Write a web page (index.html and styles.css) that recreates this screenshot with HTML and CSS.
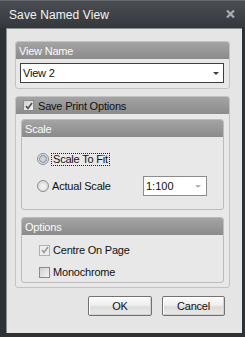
FILE: index.html
```html
<!DOCTYPE html>
<html>
<head>
<meta charset="utf-8">
<link rel="stylesheet" href="styles.css">
</head>
<body>
<div class="window">
  <div class="titlebar">
    <span class="title">Save Named View</span>
    <svg class="close" width="9" height="8" viewBox="0 0 9 8"><path d="M1 0.5 L8 7.5 M8 0.5 L1 7.5" stroke="#a7aeb6" stroke-width="2.2" fill="none"/></svg>
  </div>
  <div class="client">
    <section class="group g-view">
      <div class="group-h">View Name</div>
      <div class="group-b view-b">
        <div class="select">
          <span>View 2</span>
          <svg width="6" height="3" viewBox="0 0 6 3"><path d="M0 0 H6 L3 3 Z" fill="#3c3c3c"/></svg>
        </div>
      </div>
    </section>
    <section class="group g-print">
      <div class="group-h dark"><span class="cb checked"><svg width="8" height="8" viewBox="0 0 8 8"><path d="M1 4 L3 6.5 L7 1" stroke="#4a5058" stroke-width="1.6" fill="none"/></svg></span>Save Print Options</div>
      <div class="group-b print-b">
        <section class="group inner g-scale">
          <div class="group-h">Scale</div>
          <div class="group-b scale-b">
            <div class="row r1"><span class="radio active"></span><span class="focus">Scale To Fit</span></div>
            <div class="row r2"><span class="radio"></span><span class="lbl">Actual Scale</span>
              <div class="combo"><span>1:100</span><svg width="6" height="3" viewBox="0 0 6 3"><path d="M0 0 H6 L3 3 Z" fill="#b4b4b4"/></svg></div>
            </div>
          </div>
        </section>
        <section class="group inner g-options">
          <div class="group-h">Options</div>
          <div class="group-b opt-b">
            <div class="row"><span class="cb disabled"><svg width="8" height="8" viewBox="0 0 8 8"><path d="M1 4 L3 6.5 L7 1" stroke="#9a9a9a" stroke-width="1.6" fill="none"/></svg></span><span class="lbl2">Centre On Page</span></div>
            <div class="row"><span class="cb"></span><span class="lbl2">Monochrome</span></div>
          </div>
        </section>
      </div>
    </section>
    <div class="buttons">
      <button class="btn ok">OK</button>
      <button class="btn cancel">Cancel</button>
    </div>
  </div>
</div>
</body>
</html>
```

FILE: styles.css
```css
html, body { margin: 0; padding: 0; }
body {
  font-family: "Liberation Sans", Arial, sans-serif;
  font-size: 11px;
  color: #111;
}
.window {
  width: 245px;
  height: 337px;
  background: #2e3135;
  display: flex;
  flex-direction: column;
}
.titlebar {
  height: 28px;
  box-sizing: border-box;
  border-top: 1px solid #64686d;
  background: linear-gradient(#4a4e53, #34373b);
  display: flex;
  align-items: center;
  padding: 0 10px 0 9px;
}
.title {
  color: #f4f4f4;
  font-size: 12px;
  letter-spacing: 0.1px;
  flex: 1;
  padding-top: 1px;
}
.close { display: block; margin-top: -1px; }
.client {
  flex: 1;
  margin: 0 3px 4px 6px;
  background: #e5e5e5;
  border-left: 1px solid #8a8d90;
  border-top: 1px solid #8a8d90;
  box-sizing: border-box;
  padding: 12px 12px 0 8px;
  display: flex;
  flex-direction: column;
}
.group {
  border: 1px solid #c3c3c3;
  border-radius: 3px;
  background: #e8e8e8;
  overflow: hidden;
}
.group.inner { border-color: #bcbcbc; }
.group-h {
  height: 17px;
  background: linear-gradient(#a4a4a4, #8b8b8b);
  color: #fbfbfb;
  padding-left: 3px;
  display: flex;
  align-items: center;
  letter-spacing: -0.2px;
}
.group-h.dark { color: #111; padding-left: 7px; }
.view-b { padding: 4px 5px 5px 4px; }
.select {
  height: 20px;
  box-sizing: border-box;
  background: #fff;
  border: 1px solid #3e3e3e;
  display: flex;
  align-items: center;
  padding: 0 4px 0 2px;
  justify-content: space-between;
  letter-spacing: -0.2px;
}
.g-print { margin-top: 7px; }
.print-b { padding: 5px 5px 4px 5px; }
.scale-b { padding: 15px 0 13px 15px; }
.row { display: flex; align-items: center; height: 14px; }
.r2 { margin-top: 10px; height: 20px; }
.radio {
  width: 12px;
  height: 12px;
  box-sizing: border-box;
  border-radius: 50%;
  border: 1px solid #8e8e8e;
  background: radial-gradient(circle at 50% 55%, #efefef 30%, #c4c4c4 100%);
}
.radio.active {
  background: radial-gradient(circle, #c9d1da 0 2.5px, #9aa3ad 3px 3.8px, #dfe2e6 4.2px);
}
.focus {
  margin-left: 2px;
  padding: 0 1px;
  border: 1px dotted #222;
  line-height: 11px;
  letter-spacing: -0.2px;
}
.lbl { margin-left: 3px; width: 91px; letter-spacing: -0.2px; }
.combo {
  width: 64px;
  height: 20px;
  box-sizing: border-box;
  background: #fff;
  border: 1px solid #8c8c8c;
  display: flex;
  align-items: center;
  justify-content: space-between;
  padding: 0 5px 0 2px;
}
.g-options { margin-top: 7px; }
.opt-b { padding: 8px 0 3px 17px; display: flex; flex-direction: column; gap: 8px; }
.cb {
  width: 11px;
  height: 11px;
  box-sizing: border-box;
  border: 1px solid #8a8a8a;
  background: linear-gradient(135deg, #d0d0d0, #f4f4f4);
  display: inline-flex;
  align-items: center;
  justify-content: center;
}
.group-h .cb { margin-right: 4px; }
.cb.disabled { border-color: #b0b0b0; background: #ececec; }
.lbl2 { margin-left: 3px; letter-spacing: -0.2px; }
.buttons {
  display: flex;
  justify-content: flex-end;
  gap: 10px;
  margin-top: 8px;
  padding-right: 5px;
}
.btn {
  height: 20px;
  box-sizing: border-box;
  border: 1px solid #727272;
  border-radius: 2px;
  background: linear-gradient(#fbfbfb 0%, #efefef 45%, #dcdcdc 55%, #eaeaea 100%);
  box-shadow: inset 1px 1px 0 #fff, inset -1px -1px 0 #d0d0d0;
  font-family: "Liberation Sans", Arial, sans-serif;
  font-size: 11px;
  color: #111;
  padding: 0;
  letter-spacing: -0.2px;
}
.ok { width: 64px; }
.cancel { width: 63px; }
```
